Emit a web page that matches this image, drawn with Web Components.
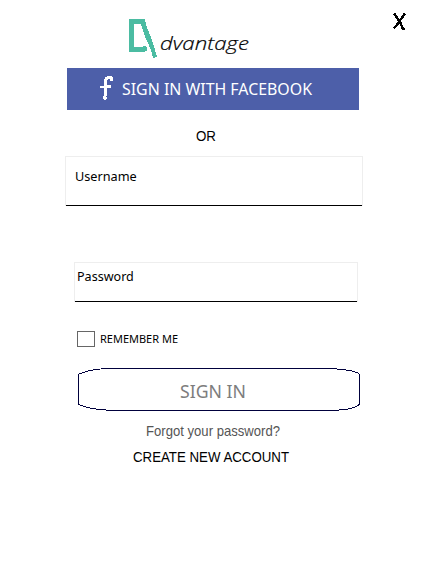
<!DOCTYPE html>
<html lang="en"><head><meta charset="utf-8"><title>Advantage sign in</title>
<style>body{margin:0;background:#fff;color:#000;font-family:"Noto Sans",sans-serif}</style></head>
<body><sign-in-page></sign-in-page>
<script>
const define = (name, html, setup) => customElements.define(name, class extends HTMLElement {
  connectedCallback() {
    if (this.shadowRoot) return;
    this.attachShadow({mode: 'open'}).innerHTML = html;
    if (setup) setup(this, this.shadowRoot);
  }
});

// A single line of text condensed or expanded to the width it is given.
define('fit-text', `<style>
:host{display:block;white-space:nowrap;flex:none}
span{display:inline-block;transform-origin:0 50%}
</style><span><slot></slot></span>`, (host, root) => {
  const w = +host.getAttribute('width');
  const span = root.querySelector('span');
  host.style.width = w + 'px';
  span.style.transform = `scaleX(${w / span.getBoundingClientRect().width})`;
});

define('brand-logo', `<style>
:host{display:flex;align-items:flex-start}
svg{display:block;flex:none}
fit-text{font:italic 300 18px/24px "Open Sans","Noto Sans",sans-serif;-webkit-text-stroke:.2px #000;margin:13px 0 0 0}
</style>
<svg width="32" height="42" viewBox="128 18 32 42" shape-rendering="crispEdges" fill="#4bbca2">
<path d="M129 19H145L146 25L148 30L151 37L153 43L155 50L157 57L153 58L151 50L148 43L145 37L143 30L141 24H134V47H143V46H146V47H147V51H145V52H129Z"/></svg>
<fit-text width="89">dvantage</fit-text>`);

define('close-button', `<style>:host{display:block}svg{display:block}</style>
<svg width="15" height="19" viewBox="392 12 15 19" fill="none" stroke="#000" shape-rendering="crispEdges">
<path stroke-width="2.5" d="M394 13.5L398 19L400 22L403 29H405"/><path stroke-width="2.5" d="M405 13.5L401 19L396 26L393.5 28.5"/></svg>`);

define('facebook-button', `<style>
:host{display:flex;box-sizing:border-box;width:292px;height:42px;padding-left:33px;background:#4d5fa9;color:#fff}
svg{flex:none;display:block;margin:7px 7px 0 0}
fit-text{font:17px/24px "Noto Sans",sans-serif;margin-top:9px}
</style><svg width="15" height="27" viewBox="100 75 15 27" fill="#fff" shape-rendering="crispEdges">
<path d="M104 79H105V77H107V76H112V77H113V81H110V79H108V80H107V85H111V88H107V96H106V97H107V99H106V100H104V99H103V96H104V88H100V86H104Z"/></svg>
<fit-text width="190"><slot></slot></fit-text>`);

define('text-field', `<style>
:host{display:block;box-sizing:border-box;border:1px solid #eee;border-bottom:0;position:relative}
:host::after{content:"";position:absolute;left:0;right:0;bottom:0;height:1px;background:#000}
fit-text{font:13px/20px "Noto Sans",sans-serif}
</style><fit-text><slot></slot></fit-text>`, (host, root) => {
  const label = root.querySelector('fit-text');
  const w = +host.getAttribute('label-width');
  const span = label.shadowRoot.querySelector('span');
  label.style.width = w + 'px';
  span.style.transform = `scaleX(${w / span.offsetWidth})`;
});

define('check-box', `<style>
:host{display:flex;align-items:flex-start}
i{box-sizing:border-box;width:18px;height:16px;border:1px solid #666;margin-right:5px}
fit-text{font:11px/16px "Noto Sans",sans-serif}
</style><i></i><fit-text width="78"><slot></slot></fit-text>`);

define('submit-button', `<style>
:host{display:grid;width:283px;height:44px;color:#7d7d7d}
svg,fit-text{grid-area:1/1}
fit-text{font:18px/24px "Noto Sans",sans-serif;margin:11px 0 0 103px}
</style><svg width="283" height="44" fill="none" stroke="#00003c" shape-rendering="crispEdges">
<path d="M1.5 36V7Q1.5 6 6 4.5Q15 1.5 29 .5H253Q272 1.5 280 4.5Q282.5 6 282.5 7V36Q280 40 268 41.5Q256 43 241 42.5H38Q10 41.5 1.5 36Z"/></svg>
<fit-text width="66"><slot></slot></fit-text>`);

define('sign-in-page', `<style>
:host{display:flex;flex-direction:column;align-items:flex-start;width:423px;height:564px;overflow:hidden;background:#fff}
header{display:flex;height:68px;width:100%}
brand-logo{margin:18px 0 0 128px}
close-button{margin:12px 0 0 143px}
facebook-button{margin-left:67px}
.arial{font:14.5px/20px "Liberation Sans",Arial,sans-serif}
.or{margin:16px 0 10px 196px}
.user{margin-left:65px;width:298px;height:50px;padding:9px 0 0 8.5px}
.pass{margin:56px 0 0 74px;width:284px;height:40px;padding:3px 0 0 2px}
check-box{margin:29px 0 0 77px}
submit-button{margin:21px 0 0 77px}
.forgot{margin:9px 0 0 146px;color:#555}
.create{margin:6px 0 0 133px}
</style>
<header><brand-logo></brand-logo><close-button></close-button></header>
<facebook-button>SIGN IN WITH FACEBOOK</facebook-button>
<fit-text class="arial or" width="20">OR</fit-text>
<text-field class="user" label-width="61.5">Username</text-field>
<text-field class="pass" label-width="57">Password</text-field>
<check-box>REMEMBER ME</check-box>
<submit-button>SIGN IN</submit-button>
<fit-text class="arial forgot" width="134">Forgot your password?</fit-text>
<fit-text class="arial create" width="156">CREATE NEW ACCOUNT</fit-text>`);
</script></body></html>
